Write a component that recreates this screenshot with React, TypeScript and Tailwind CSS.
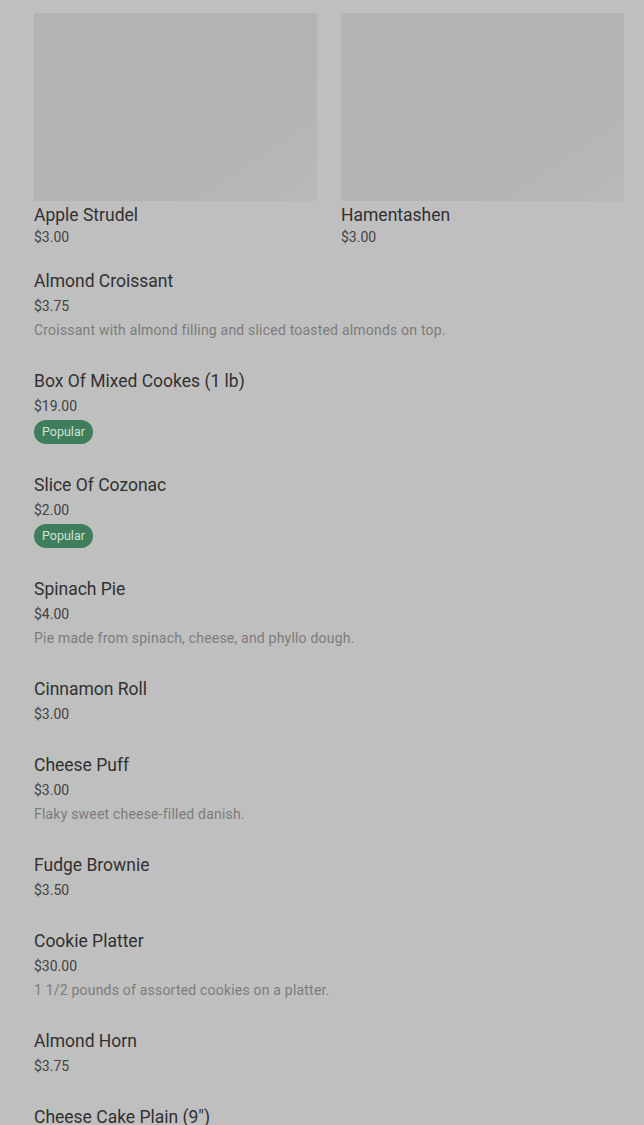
const featured = [
  { name: 'Apple Strudel', price: '$3.00' },
  { name: 'Hamentashen', price: '$3.00' },
];

const items = [
  { name: 'Almond Croissant', price: '$3.75', description: 'Croissant with almond filling and sliced toasted almonds on top.' },
  { name: 'Box Of Mixed Cookes (1 lb)', price: '$19.00', popular: true },
  { name: 'Slice Of Cozonac', price: '$2.00', popular: true },
  { name: 'Spinach Pie', price: '$4.00', description: 'Pie made from spinach, cheese, and phyllo dough.' },
  { name: 'Cinnamon Roll', price: '$3.00' },
  { name: 'Cheese Puff', price: '$3.00', description: 'Flaky sweet cheese-filled danish.' },
  { name: 'Fudge Brownie', price: '$3.50' },
  { name: 'Cookie Platter', price: '$30.00', description: '1 1/2 pounds of assorted cookies on a platter.' },
  { name: 'Almond Horn', price: '$3.75' },
  { name: 'Cheese Cake Plain (9")', price: '$28.00' },
];

export default function App() {
  return (
    <div
      className="min-h-screen h-[1125px] overflow-hidden bg-[#bfbfbf] pl-[34px] pr-5 pt-[13px]"
      style={{ fontFamily: 'Roboto, "Liberation Sans", sans-serif' }}
    >
      {/* Featured */}
      <div className="grid grid-cols-[283px_283px] gap-6">
        {featured.map((item) => (
          <div key={item.name}>
            <div className="h-[188px] bg-gradient-to-br from-[#b3b3b3] via-[#b3b3b3] via-65% to-[#b9b9b9]" />
            <div className="mt-[2px] text-[17.5px] leading-6 text-[#313131]">{item.name}</div>
            <div className="text-[14px] leading-5 text-[#444]">{item.price}</div>
          </div>
        ))}
      </div>

      {/* Menu list */}
      <div className="mt-[22px] flex flex-col gap-[27px]">
        {items.map((item) => (
          <div key={item.name}>
            <div className="text-[17.5px] leading-6 text-[#313131]">{item.name}</div>
            <div className="mt-[1px] text-[14px] leading-6 text-[#444]">{item.price}</div>
            {item.description && (
              <div className="text-[14px] leading-6 tracking-[0.2px] text-[#7c7c7c]">{item.description}</div>
            )}
            {item.popular && (
              <div className="mt-[2px] mb-[2px] inline-flex h-6 items-center rounded-full bg-[#3e7e5d] px-2 text-[12.5px] text-[#cfe3d6]">
                Popular
              </div>
            )}
          </div>
        ))}
      </div>
    </div>
  );
}
